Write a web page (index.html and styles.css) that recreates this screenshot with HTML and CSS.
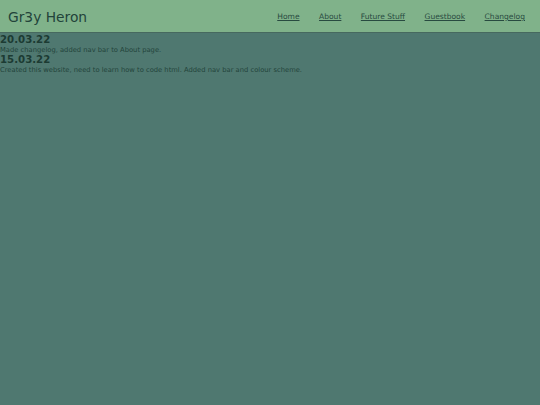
FILE: index.html
```html
<!DOCTYPE html>
<html>
<head>
<meta charset="utf-8">
<title>Gr3y Heron</title>
<link rel="stylesheet" href="styles.css">
</head>
<body>
<header class="topbar">
  <div class="site-title">Gr3y Heron</div>
  <nav class="nav">
    <a href="#">Home</a>
    <a href="#">About</a>
    <a href="#">Future Stuff</a>
    <a href="#">Guestbook</a>
    <a href="#">Changelog</a>
  </nav>
</header>
<main class="log">
  <h2 class="date">20.03.22</h2>
  <p class="entry">Made changelog, added nav bar to About page.</p>
  <h2 class="date">15.03.22</h2>
  <p class="entry">Created this website, need to learn how to code html. Added nav bar and colour scheme.</p>
</main>
</body>
</html>
```
FILE: styles.css
```css
html, body {
  margin: 0;
  padding: 0;
  height: 100%;
}
body {
  background: #4f7870;
  color: #1f3f37;
  font-family: "DejaVu Sans", Verdana, sans-serif;
}
.topbar {
  display: flex;
  align-items: center;
  justify-content: space-between;
  height: 31px;
  padding: 1px 15px 0 8px;
  background: #80b28a;
  border-bottom: 1px solid #47695f;
}
.site-title {
  font-size: 13.8px;
  color: #22433a;
}
.nav {
  display: flex;
  gap: 19.5px;
}
.nav a {
  font-size: 7.55px;
  color: #284a40;
  text-decoration: underline;
}
.log {
  padding: 1px 0 0;
}
.date {
  margin: 0;
  font-size: 10.2px;
  font-weight: bold;
  line-height: 12px;
  color: #1c3b33;
}
.entry {
  margin: 0;
  font-size: 6.75px;
  line-height: 8.3px;
  color: #23443b;
}
```
